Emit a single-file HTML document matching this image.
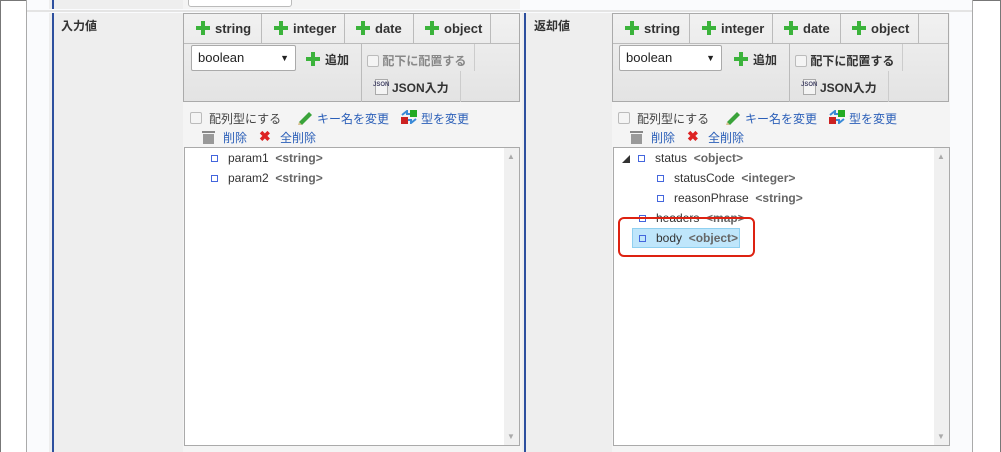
<!DOCTYPE html>
<html><head><meta charset="utf-8"><style>
*{margin:0;padding:0;box-sizing:border-box}
body{width:1001px;height:452px;position:relative;overflow:hidden;background:#fff;font-family:"Liberation Sans","Noto Sans CJK JP",sans-serif;font-size:12px;color:#333}
.a{position:absolute;white-space:nowrap}
.tb{position:absolute;top:13px;width:337px;height:89px;border:1px solid #aaa;background:linear-gradient(#f1f1f1,#e3e3e3)}
.btn{position:absolute;top:0;height:29px;border-right:1px solid #bbb;font-weight:bold;font-size:13px;line-height:29px;color:#333}
.plus{display:inline-block;width:14px;height:14px;position:relative;vertical-align:-2px;margin:0 5px 0 0}
.plus:before{content:"";position:absolute;left:5px;top:0;width:4px;height:14px;background:#3bb33b}
.plus:after{content:"";position:absolute;left:0;top:5px;width:14px;height:4px;background:#3bb33b}
.sel{position:absolute;background:#fff;border:1px solid #aaa;border-radius:2px;height:26px;font-size:13px;line-height:24px;padding-left:6px;color:#222}
.cb{display:inline-block;width:12px;height:12px;border:1px solid #bbb;border-radius:2px;background:#f4f4f4;vertical-align:-2px}
.lnk{color:#2b5fb8}
.tree{position:absolute;top:147px;height:299px;background:#fff;border:1px solid #aaa}
.sb{position:absolute;right:0;top:0;width:15px;height:100%;background:#f0f0f0}
.row{position:absolute;font-size:12px;color:#333;white-space:nowrap}
.row b{font-weight:bold;color:#666}
.sq{display:inline-block;width:7px;height:7px;border:1px solid #4466dd;margin-right:10px;vertical-align:0}
</style></head><body>
<div class="a" style="left:0;top:0;width:1001px;height:452px;border:1px solid #777;border-bottom:none"></div>
<div class="a" style="left:26px;top:0;width:1px;height:452px;background:#aaa"></div>
<div class="a" style="left:27px;top:0;width:945px;height:452px;background:#fafbfd"></div>
<div class="a" style="left:972px;top:0;width:1px;height:452px;background:#aaa"></div>
<div class="a" style="left:49px;top:0;width:134px;height:9px;background:#eee"></div>
<div class="a" style="left:52px;top:0;width:2px;height:9px;background:#2d4f9e"></div>
<div class="a" style="left:183px;top:0;width:337px;height:9px;background:#f4f4f4"></div>
<div class="a" style="left:188px;top:-3px;width:104px;height:10px;border:1px solid #bbb;border-radius:3px;background:#fff"></div>
<div class="a" style="left:27px;top:10px;width:945px;height:2px;background:#e4e4e4"></div>

<div class="a" style="left:49px;top:13px;width:134px;height:439px;background:#eee"></div>
<div class="a" style="left:52px;top:13px;width:2px;height:439px;background:#2d4f9e"></div>
<div class="a" style="left:61px;top:17px;font-size:12px;font-weight:bold;color:#333">入力値</div>
<div class="a" style="left:183px;top:13px;width:340px;height:439px;background:#f4f4f4"></div>
<div class="a" style="left:522px;top:13px;width:91px;height:439px;background:#eee"></div>
<div class="a" style="left:524px;top:13px;width:2px;height:439px;background:#2d4f9e"></div>
<div class="a" style="left:534px;top:17px;font-size:12px;font-weight:bold;color:#333">返却値</div>
<div class="a" style="left:612px;top:13px;width:338px;height:439px;background:#f4f4f4"></div>

<!-- LEFT toolbar -->
<div class="tb" style="left:183px">
 <div class="btn" style="left:0;width:78px;padding-left:12px"><span class="plus"></span>string</div>
 <div class="btn" style="left:78px;width:83px;padding-left:12px"><span class="plus"></span>integer</div>
 <div class="btn" style="left:161px;width:69px;padding-left:11px"><span class="plus"></span>date</div>
 <div class="btn" style="left:230px;width:77px;padding-left:11px"><span class="plus"></span>object</div>
 <div class="a" style="left:0;top:29px;width:335px;height:1px;background:#bbb"></div>
 <div class="sel" style="left:7px;top:31px;width:105px">boolean<span class="a" style="right:6px;top:0;font-size:9px">▼</span></div>
 <div class="a" style="left:122px;top:37px;font-weight:bold;font-size:12px"><span class="plus"></span>追加</div>
 <div class="a" style="left:177px;top:30px;width:1px;height:58px;background:#bbb"></div>
 <div class="a" style="left:183px;top:38px;color:#888;font-weight:bold;font-size:12px"><span class="cb"></span> 配下に配置する</div>
 <div class="a" style="left:290px;top:30px;width:1px;height:27px;background:#ccc"></div>
 <svg class="a" style="left:189px;top:63px" width="16" height="18"><rect x="2.5" y="2.5" width="12" height="15" fill="#f4f4f4" stroke="#aaa"/><text x="0" y="9" font-size="6" font-weight="bold" fill="#446" font-family="Liberation Sans">JSON</text></svg>
 <div class="a" style="left:208px;top:65px;font-weight:bold;font-size:12px">JSON入力</div>
 <div class="a" style="left:276px;top:57px;width:1px;height:31px;background:#ccc"></div>
</div>
<div class="a" style="left:190px;top:111px"><span class="cb"></span></div>
<div class="a" style="left:209px;top:110px;color:#444">配列型にする</div>
<svg class="a" style="left:296px;top:109px" width="18" height="16"><path d="M3 13 L13 3 L16 6 L6 16 Z" fill="#3aa33a"/><path d="M3 13 L2 16 L6 16 Z" fill="#d8c090"/></svg>
<div class="a lnk" style="left:317px;top:110px">キー名を変更</div>
<svg class="a" style="left:401px;top:110px" width="16" height="14"><rect x="0" y="7" width="7" height="7" fill="#c22"/><rect x="9" y="0" width="7" height="7" fill="#2a2"/><path d="M1 5 L6 1 L6 4 L9 4" stroke="#3a8ad8" stroke-width="2" fill="none"/><path d="M15 9 L10 13 L10 10 L7 10" stroke="#3a8ad8" stroke-width="2" fill="none"/></svg>
<div class="a lnk" style="left:421px;top:110px">型を変更</div>
<svg class="a" style="left:202px;top:130px" width="13" height="14"><rect x="0" y="1" width="13" height="2" fill="#888"/><rect x="1" y="4" width="11" height="10" fill="#999"/></svg>
<div class="a lnk" style="left:223px;top:129px">削除</div>
<div class="a" style="left:259px;top:128px;color:#d22;font-weight:bold;font-size:14px">✖</div>
<div class="a lnk" style="left:280px;top:129px">全削除</div>
<div class="tree" style="left:184px;width:336px">
 <div class="sb"><span class="a" style="left:3px;top:4px;font-size:8px;color:#aaa">▲</span><span class="a" style="left:3px;bottom:4px;font-size:8px;color:#aaa">▼</span></div>
 <div class="row" style="left:26px;top:3px"><span class="sq"></span>param1 &nbsp;<b>&lt;string&gt;</b></div>
 <div class="row" style="left:26px;top:23px"><span class="sq"></span>param2 &nbsp;<b>&lt;string&gt;</b></div>
</div>

<!-- RIGHT toolbar -->
<div class="tb" style="left:612px">
 <div class="btn" style="left:0;width:77px;padding-left:12px"><span class="plus"></span>string</div>
 <div class="btn" style="left:77px;width:83px;padding-left:12px"><span class="plus"></span>integer</div>
 <div class="btn" style="left:160px;width:68px;padding-left:11px"><span class="plus"></span>date</div>
 <div class="btn" style="left:228px;width:78px;padding-left:11px"><span class="plus"></span>object</div>
 <div class="a" style="left:0;top:29px;width:335px;height:1px;background:#bbb"></div>
 <div class="sel" style="left:6px;top:31px;width:103px">boolean<span class="a" style="right:6px;top:0;font-size:9px">▼</span></div>
 <div class="a" style="left:121px;top:37px;font-weight:bold;font-size:12px"><span class="plus"></span>追加</div>
 <div class="a" style="left:176px;top:30px;width:1px;height:58px;background:#bbb"></div>
 <div class="a" style="left:182px;top:38px;color:#333;font-weight:bold;font-size:12px"><span class="cb"></span> 配下に配置する</div>
 <div class="a" style="left:289px;top:30px;width:1px;height:27px;background:#ccc"></div>
 <svg class="a" style="left:188px;top:63px" width="16" height="18"><rect x="2.5" y="2.5" width="12" height="15" fill="#f4f4f4" stroke="#aaa"/><text x="0" y="9" font-size="6" font-weight="bold" fill="#446" font-family="Liberation Sans">JSON</text></svg>
 <div class="a" style="left:207px;top:65px;font-weight:bold;font-size:12px">JSON入力</div>
 <div class="a" style="left:275px;top:57px;width:1px;height:31px;background:#ccc"></div>
</div>
<div class="a" style="left:618px;top:111px"><span class="cb"></span></div>
<div class="a" style="left:637px;top:110px;color:#444">配列型にする</div>
<svg class="a" style="left:724px;top:109px" width="18" height="16"><path d="M3 13 L13 3 L16 6 L6 16 Z" fill="#3aa33a"/><path d="M3 13 L2 16 L6 16 Z" fill="#d8c090"/></svg>
<div class="a lnk" style="left:745px;top:110px">キー名を変更</div>
<svg class="a" style="left:829px;top:110px" width="16" height="14"><rect x="0" y="7" width="7" height="7" fill="#c22"/><rect x="9" y="0" width="7" height="7" fill="#2a2"/><path d="M1 5 L6 1 L6 4 L9 4" stroke="#3a8ad8" stroke-width="2" fill="none"/><path d="M15 9 L10 13 L10 10 L7 10" stroke="#3a8ad8" stroke-width="2" fill="none"/></svg>
<div class="a lnk" style="left:849px;top:110px">型を変更</div>
<svg class="a" style="left:630px;top:130px" width="13" height="14"><rect x="0" y="1" width="13" height="2" fill="#888"/><rect x="1" y="4" width="11" height="10" fill="#999"/></svg>
<div class="a lnk" style="left:651px;top:129px">削除</div>
<div class="a" style="left:687px;top:128px;color:#d22;font-weight:bold;font-size:14px">✖</div>
<div class="a lnk" style="left:708px;top:129px">全削除</div>
<div class="tree" style="left:613px;width:337px">
 <div class="sb"><span class="a" style="left:3px;top:4px;font-size:8px;color:#aaa">▲</span><span class="a" style="left:3px;bottom:4px;font-size:8px;color:#aaa">▼</span></div>
 <div class="row" style="left:8px;top:3px"><span style="font-size:8px;margin-right:8px">◢</span><span class="sq"></span>status &nbsp;<b>&lt;object&gt;</b></div>
 <div class="row" style="left:43px;top:23px"><span class="sq"></span>statusCode &nbsp;<b>&lt;integer&gt;</b></div>
 <div class="row" style="left:43px;top:43px"><span class="sq"></span>reasonPhrase &nbsp;<b>&lt;string&gt;</b></div>
 <div class="row" style="left:25px;top:63px"><span class="sq"></span>headers &nbsp;<b>&lt;map&gt;</b></div>
 <div class="a" style="left:18px;top:80px;width:108px;height:20px;background:#bfe6fb;border:1px solid #8fd0f0"></div>
 <div class="row" style="left:25px;top:83px"><span class="sq"></span>body &nbsp;<b>&lt;object&gt;</b></div>
 <div class="a" style="left:4px;top:69px;width:137px;height:40px;border:2px solid #d21;border-radius:6px"></div>
</div>
</body></html>
